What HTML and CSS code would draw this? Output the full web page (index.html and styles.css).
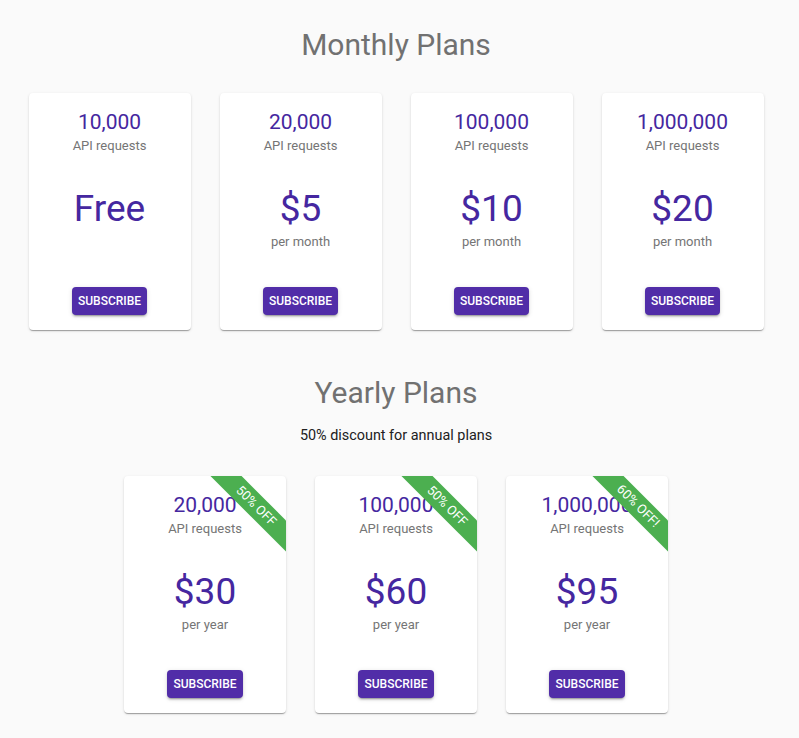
FILE: index.html
```html
<!DOCTYPE html>
<html>
<head>
<meta charset="utf-8">
<link rel="stylesheet" href="styles.css">
</head>
<body>
<div class="page">
  <h1 class="title title-monthly">Monthly Plans</h1>
  <div class="cards">
    <div class="card">
      <div class="qty">10,000</div>
      <div class="unit">API requests</div>
      <div class="price">Free</div>
      <button class="btn">Subscribe</button>
    </div>
    <div class="card">
      <div class="qty">20,000</div>
      <div class="unit">API requests</div>
      <div class="price">$5</div>
      <div class="period">per month</div>
      <button class="btn">Subscribe</button>
    </div>
    <div class="card">
      <div class="qty">100,000</div>
      <div class="unit">API requests</div>
      <div class="price">$10</div>
      <div class="period">per month</div>
      <button class="btn">Subscribe</button>
    </div>
    <div class="card">
      <div class="qty">1,000,000</div>
      <div class="unit">API requests</div>
      <div class="price">$20</div>
      <div class="period">per month</div>
      <button class="btn">Subscribe</button>
    </div>
  </div>

  <h1 class="title title-yearly">Yearly Plans</h1>
  <p class="subtitle">50% discount for annual plans</p>
  <div class="cards">
    <div class="card">
      <div class="ribbon">50% OFF</div>
      <div class="qty">20,000</div>
      <div class="unit">API requests</div>
      <div class="price">$30</div>
      <div class="period">per year</div>
      <button class="btn">Subscribe</button>
    </div>
    <div class="card">
      <div class="ribbon">50% OFF</div>
      <div class="qty">100,000</div>
      <div class="unit">API requests</div>
      <div class="price">$60</div>
      <div class="period">per year</div>
      <button class="btn">Subscribe</button>
    </div>
    <div class="card">
      <div class="ribbon">60% OFF!</div>
      <div class="qty">1,000,000</div>
      <div class="unit">API requests</div>
      <div class="price">$95</div>
      <div class="period">per year</div>
      <button class="btn">Subscribe</button>
    </div>
  </div>
</div>
</body>
</html>
```

FILE: styles.css
```css
html, body {
  margin: 0;
  padding: 0;
  background: #fafafa;
  font-family: Roboto, "Liberation Sans", Arial, sans-serif;
}

.page {
  padding: 27px 7px 25px 0;
}

.title {
  margin: 0;
  text-align: center;
  font-size: 30px;
  line-height: 36px;
  font-weight: 400;
  color: #717171;
}

.title-yearly {
  margin-top: 45px;
}

.subtitle {
  margin: 15px 0 0;
  text-align: center;
  font-size: 14.4px;
  line-height: 20px;
  color: #212121;
}

.cards {
  display: flex;
  justify-content: center;
  gap: 29px;
  margin-top: 30px;
}

.card {
  position: relative;
  overflow: hidden;
  box-sizing: border-box;
  width: 162px;
  height: 237px;
  padding: 16px 0 15px;
  background: #fff;
  border-radius: 4px;
  box-shadow: 0 2px 1px -1px rgba(0,0,0,0.2), 0 1px 1px 0 rgba(0,0,0,0.14), 0 1px 3px 0 rgba(0,0,0,0.12);
  display: flex;
  flex-direction: column;
  align-items: center;
  text-align: center;
}

.qty {
  font-size: 21px;
  line-height: 26px;
  color: #4527a0;
}

.unit {
  margin-top: 3px;
  font-size: 13px;
  line-height: 16px;
  color: #757575;
}

.price {
  margin-top: 33px;
  font-size: 37px;
  line-height: 44px;
  color: #4527a0;
}

.period {
  margin-top: 3px;
  font-size: 13px;
  line-height: 16px;
  color: #757575;
}

.btn {
  margin-top: auto;
  height: 28px;
  padding: 0 6px;
  border: 0;
  border-radius: 4px;
  background: #512da8;
  color: #fff;
  font-family: Roboto, "Liberation Sans", Arial, sans-serif;
  font-size: 12px;
  font-weight: 500;
  letter-spacing: 0;
  text-transform: uppercase;
  box-shadow: 0 3px 1px -2px rgba(0,0,0,0.2), 0 2px 2px 0 rgba(0,0,0,0.14), 0 1px 5px 0 rgba(0,0,0,0.12);
}

.ribbon {
  position: absolute;
  left: 72px;
  top: 19px;
  width: 120px;
  height: 22px;
  line-height: 22px;
  background: #4caf50;
  color: #fff;
  font-size: 13px;
  text-align: center;
  transform: rotate(45deg);
}
```
